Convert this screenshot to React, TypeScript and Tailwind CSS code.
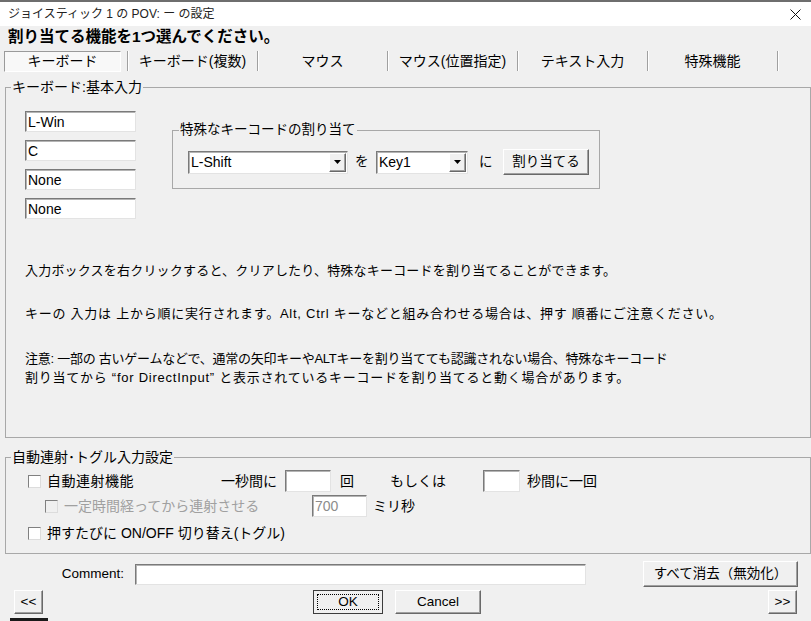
import React from "react";

const sunken =
	"bg-white border border-t-[#7a7a7a] border-l-[#7a7a7a] border-b-[#e3e3e3] border-r-[#e3e3e3] shadow-[inset_1px_1px_0_#b4b4b4]";
const raised =
	"bg-[#f0f0f0] border border-t-white border-l-white border-b-[#696969] border-r-[#696969] shadow-[inset_-1px_-1px_0_#a0a0a0]";

const Field: React.FC<{ value?: string; className?: string; disabled?: boolean }> = ({
	value = "",
	className = "",
	disabled,
}) => (
	<div
		className={`${sunken} flex items-center pl-[2px] text-[14px] leading-none ${
			disabled ? "bg-[#f0f0f0] text-[#8c8c8c]" : "text-black"
		} ${className}`}
	>
		{value}
	</div>
);

const Button: React.FC<{ label: string; className?: string }> = ({ label, className = "" }) => (
	<div className={`${raised} flex items-center justify-center ${className}`}>{label}</div>
);

const Check: React.FC<{ disabled?: boolean }> = ({ disabled }) => (
	<span
		className={`inline-block w-[13px] h-[13px] border border-t-[#808080] border-l-[#808080] border-b-[#dcdcdc] border-r-[#dcdcdc] ${
			disabled ? "bg-[#f0f0f0]" : "bg-white"
		}`}
	/>
);

const Select: React.FC<{ value: string; className?: string }> = ({ value, className = "" }) => (
	<div className={`${sunken} h-[23px] flex items-center justify-between pl-[2px] pr-[1px] ${className}`}>
		<span className="text-[14px]">{value}</span>
		<span className={`${raised} w-[17px] h-[19px] flex items-center justify-center`}>
			<svg width="7" height="4" viewBox="0 0 7 4">
				<path d="M0 0H7L3.5 4Z" fill="#000" />
			</svg>
		</span>
	</div>
);

const tabs = ["キーボード(複数)", "マウス", "マウス(位置指定)", "テキスト入力", "特殊機能"];

const Sep = () => <span className="w-px h-[20px] bg-[#a0a0a0] shadow-[1px_0_0_#ffffff]" />;

export default function App() {
	return (
		<div className="w-[811px] h-[621px] overflow-hidden bg-[#f0f0f0] text-black flex flex-col font-[Liberation_Sans,Noto_Sans_CJK_JP,sans-serif]">
			{/* title bar */}
			<div className="h-[26px] bg-white border-t-2 border-[#6e6e6e] flex items-center justify-between pl-[8px] pr-[10px]">
				<span className="text-[12px] text-[#222]">ジョイスティック 1 の POV: ー の設定</span>
				<svg width="11" height="11" viewBox="0 0 11 11">
					<path d="M0.5 0.5L10.5 10.5M10.5 0.5L0.5 10.5" stroke="#111" strokeWidth="1" />
				</svg>
			</div>

			<div className="h-[22px] pl-[8px] text-[15.5px] font-bold leading-[22px]">
				割り当てる機能を1つ選んでください。
			</div>

			{/* tabs */}
			<div className="h-[26px] flex items-center text-[14px]">
				<div className="w-[127px] h-full flex items-center">
					<div className="ml-[4px] w-[117px] h-[21px] flex items-center justify-center bg-[#f8f8f8] border border-t-[#9a9a9a] border-l-[#9a9a9a] border-b-white border-r-white">
						キーボード
					</div>
				</div>
				<Sep />
				{tabs.map((t) => (
					<React.Fragment key={t}>
						<div className="w-[129px] text-center">{t}</div>
						<Sep />
					</React.Fragment>
				))}
			</div>

			{/* keyboard group */}
			<fieldset className="mt-[5px] ml-[5px] h-[359px] border border-[#a8a8a8] pl-[19px] text-[13px]">
				<legend className="-ml-[14px] px-px leading-[16px] text-[14px]">キーボード:基本入力</legend>
				<div className="flex pt-[16px]">
					<div className="flex flex-col gap-[8px] w-[111px]">
						<Field value="L-Win" className="h-[21px]" />
						<Field value="C" className="h-[21px]" />
						<Field value="None" className="h-[21px]" />
						<Field value="None" className="h-[21px]" />
					</div>
					<fieldset className="ml-[36px] mt-[11px] w-[428px] h-[67px] border border-[#a8a8a8] pl-[15px]">
						<legend className="-ml-[9px] px-px leading-[16px] text-[13.5px]">特殊なキーコードの割り当て</legend>
						<div className="flex items-center pt-[11px] text-[13.5px]">
							<Select value="L-Shift" className="w-[160px]" />
							<span className="ml-[7px] w-[21px]">を</span>
							<Select value="Key1" className="w-[92px]" />
							<span className="ml-[11px] w-[24px]">に</span>
							<Button label="割り当てる" className="w-[86px] h-[26px]" />
						</div>
					</fieldset>
				</div>
				<div className="mt-[42px] leading-[19px]">
					<p className="tracking-[0.2px]">
						入力ボックスを右クリックすると、クリアしたり、特殊なキーコードを割り当てることができます。
					</p>
					<p className="mt-[24px] tracking-[0.75px]">
						キーの 入力は 上から順に実行されます。Alt, Ctrl キーなどと組み合わせる場合は、押す 順番にご注意ください。
					</p>
					<p className="mt-[26px]">
						<span className="tracking-[-0.25px]">
							注意: 一部の 古いゲームなどで、通常の矢印キーやALTキーを割り当てても認識されない場合、特殊なキーコード
						</span>
						<br />
						<span className="tracking-[0.75px]">
							割り当てから “for DirectInput” と表示されているキーコードを割り当てると動く場合があります。
						</span>
					</p>
				</div>
			</fieldset>

			{/* turbo group */}
			<fieldset className="mt-[11px] ml-[5px] h-[105px] border border-[#a8a8a8] pl-[22px] text-[14px]">
				<legend className="-ml-[17px] px-px leading-[16px]">自動連射･トグル入力設定</legend>
				<div className="flex items-center h-[22px] mt-[5px]">
					<div className="w-[193px] flex items-center">
						<Check />
						<span className="ml-[6px] tracking-[0.5px]">自動連射機能</span>
					</div>
					<span className="w-[64px]">一秒間に</span>
					<Field className="w-[46px] h-[22px]" />
					<span className="ml-[9px] w-[50px]">回</span>
					<span className="w-[93px]">もしくは</span>
					<Field className="w-[37px] h-[22px]" />
					<span className="ml-[7px]">秒間に一回</span>
				</div>
				<div className="flex items-center h-[22px] mt-[3px]">
					<div className="ml-[17px] w-[267px] flex items-center text-[#a0a0a0]">
						<Check disabled />
						<span className="ml-[6px]">一定時間経ってから連射させる</span>
					</div>
					<Field value="700" disabled className="w-[55px] h-[22px]" />
					<span className="ml-[6px]">ミリ秒</span>
				</div>
				<div className="flex items-center h-[22px] mt-[5px]">
					<Check />
					<span className="ml-[6px]">押すたびに ON/OFF 切り替え(トグル)</span>
				</div>
			</fieldset>

			{/* comment */}
			<div className="mt-[7px] h-[26px] flex items-center text-[13.5px]">
				<span className="w-[124px] text-right">Comment:</span>
				<Field className="ml-[11px] w-[451px] h-[21px]" />
				<Button label="すべて消去（無効化）" className="ml-[57px] w-[155px] h-[26px]" />
			</div>

			{/* buttons */}
			<div className="mt-[3px] h-[24px] flex items-center text-[13.5px]">
				<Button label="<<" className="ml-[14px] w-[29px] h-[24px]" />
				<div className="ml-[270px] w-[70px] h-[24px] border border-[#3c3c3c] p-[3px] bg-[#f0f0f0]">
					<div className="w-full h-full flex items-center justify-center border border-dotted border-black">OK</div>
				</div>
				<Button label="Cancel" className="ml-[12px] w-[86px] h-[24px]" />
				<Button label=">>" className="ml-[287px] w-[29px] h-[24px]" />
			</div>

			<div className="mt-auto h-[3px] flex">
				<span className="ml-[10px] w-[38px] bg-[#1a1a1a]" />
			</div>
		</div>
	);
}
